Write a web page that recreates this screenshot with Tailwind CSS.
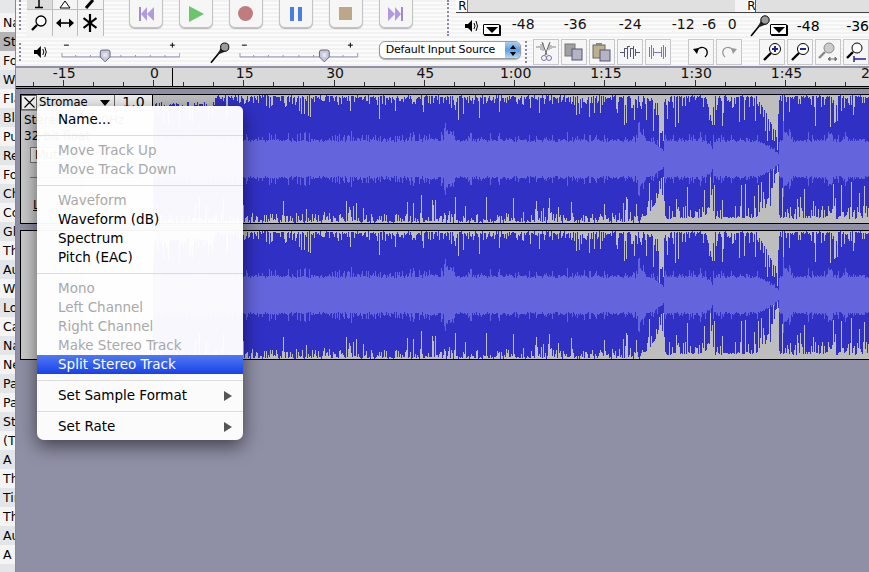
<!DOCTYPE html>
<html lang="en">
<head>
  <meta charset="UTF-8" />
  <title>Audacity</title>
  <script src="https://cdn.jsdelivr.net/npm/@tailwindcss/browser@4"></script>
</head>
<body class="overflow-hidden">
<div class="relative flex w-[869px] h-[572px] overflow-hidden bg-[#8f8fa5] text-black font-['DejaVu_Sans',sans-serif]">

  <!-- Sidebar list behind the window -->
  <div class="w-[16px] shrink-0 -mt-[6px] overflow-hidden whitespace-nowrap text-[12.5px] leading-[19px] border-r border-[#8a8a8a]">
    <div class="h-[19px] pl-[3px] bg-[#e4e8e8]">&nbsp;</div>
    <div class="h-[19px] pl-[3px] bg-[#f4f4f4]">Na</div>
    <div class="h-[19px] pl-[3px] bg-[#b4b4b4]">Str</div>
    <div class="h-[19px] pl-[3px] bg-[#f0f0f0]">Fo</div>
    <div class="h-[19px] pl-[3px] bg-[#e2e6e8]">Wi</div>
    <div class="h-[19px] pl-[3px] bg-[#f4f4f4]">Fla</div>
    <div class="h-[19px] pl-[3px] bg-[#e2e6e8]">Bla</div>
    <div class="h-[19px] pl-[3px] bg-[#f4f4f4]">Pu</div>
    <div class="h-[19px] pl-[3px] bg-[#e2e6e8]">Re</div>
    <div class="h-[19px] pl-[3px] bg-[#f4f4f4]">Fo</div>
    <div class="h-[19px] pl-[3px] bg-[#e2e6e8]">Ch</div>
    <div class="h-[19px] pl-[3px] bg-[#f4f4f4]">Co</div>
    <div class="h-[19px] pl-[3px] bg-[#e2e6e8]">Gla</div>
    <div class="h-[19px] pl-[3px] bg-[#f4f4f4]">Th</div>
    <div class="h-[19px] pl-[3px] bg-[#e2e6e8]">Au</div>
    <div class="h-[19px] pl-[3px] bg-[#f4f4f4]">We</div>
    <div class="h-[19px] pl-[3px] bg-[#e2e6e8]">Lo</div>
    <div class="h-[19px] pl-[3px] bg-[#f4f4f4]">Ca</div>
    <div class="h-[19px] pl-[3px] bg-[#e2e6e8]">Na</div>
    <div class="h-[19px] pl-[3px] bg-[#f4f4f4]">Ne</div>
    <div class="h-[19px] pl-[3px] bg-[#e2e6e8]">Pa</div>
    <div class="h-[19px] pl-[3px] bg-[#f4f4f4]">Pa</div>
    <div class="h-[19px] pl-[3px] bg-[#e2e6e8]">Sta</div>
    <div class="h-[19px] pl-[3px] bg-[#f4f4f4]">(Th</div>
    <div class="h-[19px] pl-[3px] bg-[#e2e6e8]">A l</div>
    <div class="h-[19px] pl-[3px] bg-[#f4f4f4]">Th</div>
    <div class="h-[19px] pl-[3px] bg-[#e2e6e8]">Tir</div>
    <div class="h-[19px] pl-[3px] bg-[#f4f4f4]">Th</div>
    <div class="h-[19px] pl-[3px] bg-[#e2e6e8]">Au</div>
    <div class="h-[19px] pl-[3px] bg-[#f4f4f4]">A l</div>
    <div class="h-[19px] pl-[3px] bg-[#e2e6e8]">&nbsp;</div>
  </div>

  <!-- Audacity window -->
  <div class="w-[853px] shrink-0 flex flex-col">

    <!-- Tools, transport, meters -->
    <div class="h-[38px] flex bg-[repeating-linear-gradient(0deg,#f2f2f2_0,#f2f2f2_2px,#fbfbfb_2px,#fbfbfb_4px)]">
      <div class="w-[3px] ml-[3px] mr-[5px] h-[30px] border-l-2 border-dotted border-[#8888a8]"></div>
      <div class="w-[79px] h-[36px] grid grid-cols-3 grid-rows-[9px_26px] gap-px bg-[#bdbdbd] border-r border-b border-[#bdbdbd]">
        <div class="bg-[#dcdcdc] flex justify-center items-end overflow-hidden"><svg width="14" height="9" viewBox="0 0 14 9"><path d="M7 0V7M3 7.5H11" stroke="#000" stroke-width="1.5" fill="none"/></svg></div>
        <div class="bg-[#f4f4f4] flex justify-center items-end overflow-hidden"><svg width="14" height="9" viewBox="0 0 14 9"><path d="M7 1L2 8H12Z" stroke="#000" fill="#fff"/></svg></div>
        <div class="bg-[#f4f4f4] flex justify-center items-end overflow-hidden"><svg width="14" height="9" viewBox="0 0 14 9"><path d="M3 8L10 0" stroke="#000" stroke-width="3" fill="none"/></svg></div>
        <div class="bg-[#f4f4f4] flex justify-center items-center"><svg width="18" height="18" viewBox="0 0 18 18"><circle cx="11" cy="7" r="5" stroke="#000" stroke-width="1.3" fill="#fff"/><path d="M7 11L2 16" stroke="#000" stroke-width="2.4" fill="none"/></svg></div>
        <div class="bg-[#f4f4f4] flex justify-center items-center"><svg width="18" height="10" viewBox="0 0 18 10"><path d="M3 5H15" stroke="#000" stroke-width="1.6"/><path d="M0 5L5 0.5V9.5ZM18 5L13 0.5V9.5Z" fill="#000"/></svg></div>
        <div class="bg-[#f4f4f4] flex justify-center items-center"><svg width="14" height="18" viewBox="0 0 14 18"><path d="M7 0V18M0.5 4L13.5 14M13.5 4L0.5 14" stroke="#000" stroke-width="2.2"/></svg></div>
      </div>
      <div class="w-[363px] flex gap-[16px] pl-[25px]">
        <div class="w-[34px] h-[29px] -mt-px flex items-center justify-center rounded-b-[6px] bg-[#f6f6f6] border border-[#c4c4c4] shadow-[0_1px_1px_rgba(0,0,0,0.25)]"><svg width="16" height="16" viewBox="0 0 16 16"><path d="M1 1H3V15H1Z" fill="#a488d8"/><path d="M9 1V15L3 8ZM16 1V15L9 8Z" fill="#b09ae0"/></svg></div>
        <div class="w-[34px] h-[29px] -mt-px flex items-center justify-center rounded-b-[6px] bg-[#f6f6f6] border border-[#c4c4c4] shadow-[0_1px_1px_rgba(0,0,0,0.25)]"><svg width="16" height="16" viewBox="0 0 16 16"><path d="M1 0V16L16 8Z" fill="#6cc46c"/></svg></div>
        <div class="w-[34px] h-[29px] -mt-px flex items-center justify-center rounded-b-[6px] bg-[#f6f6f6] border border-[#c4c4c4] shadow-[0_1px_1px_rgba(0,0,0,0.25)]"><div class="w-[15px] h-[15px] rounded-full bg-[#c07c7c]"></div></div>
        <div class="w-[34px] h-[29px] -mt-px flex items-center justify-center rounded-b-[6px] bg-[#f6f6f6] border border-[#c4c4c4] shadow-[0_1px_1px_rgba(0,0,0,0.25)]"><svg width="16" height="16" viewBox="0 0 16 16"><path d="M2 1H6V15H2ZM10 1H14V15H10Z" fill="#4c7ce0"/></svg></div>
        <div class="w-[34px] h-[29px] -mt-px flex items-center justify-center rounded-b-[6px] bg-[#f6f6f6] border border-[#c4c4c4] shadow-[0_1px_1px_rgba(0,0,0,0.25)]"><div class="w-[13px] h-[13px] bg-[#bca888]"></div></div>
        <div class="w-[34px] h-[29px] -mt-px flex items-center justify-center rounded-b-[6px] bg-[#f6f6f6] border border-[#c4c4c4] shadow-[0_1px_1px_rgba(0,0,0,0.25)]"><svg width="16" height="16" viewBox="0 0 16 16"><path d="M0 1V15L7 8ZM7 1V15L13 8Z" fill="#b09ae0"/><path d="M13 1H15V15H13Z" fill="#a488d8"/></svg></div>
      </div>
      <!-- Meters -->
      <div class="w-[3px] ml-[-9px] mr-[6px] h-[36px] border-l-2 border-dotted border-[#8888a8]"></div>
      <div class="flex-1 relative">
        <div class="h-[13px] flex items-start text-[12px] leading-[12px] border-b border-[#444]">
          <span class="w-[11px] pl-[2px] bg-white">R</span>
          <div class="w-[268px] h-[12px] bg-[#e0e0e0] border-l border-[#38a038]"></div>
          <div class="w-[12px] h-[12px] bg-[#f4f4f4]"></div>
          <span class="w-[8px] bg-white">R</span>
          <div class="flex-1 h-[12px] bg-[#e0e0e0] border-l border-[#c03030]"></div>
        </div>
        <div class="h-[25px] flex items-center text-[14px] pt-[1px]">
          <svg class="ml-[9px]" width="13" height="14" viewBox="0 0 13 14"><path d="M0 5H3L7 1V13L3 9H0Z" fill="#000"/><path d="M9 4Q11 7 9 10M11 2Q14 7 11 12" stroke="#000" fill="none"/></svg>
          <div class="ml-[5px] mt-[7px] w-[17px] h-[11px] flex justify-center items-center bg-white border border-black rounded-[1px] shadow-[1px_1px_0_#000]"><div class="border-x-[6px] border-x-transparent border-t-[6px] border-t-black"></div></div>
          <div class="absolute left-[30px] top-[14px] flex text-[#111] text-[14px] leading-[20px]">
            <span class="w-[74px] text-center">-48</span><span class="w-[30px] text-center">-36</span><span class="w-[80px] text-center">-24</span><span class="w-[26px] text-center">-12</span><span class="w-[26px] text-center">-6</span><span class="w-[20px] text-center">0</span>
          </div>
          <svg class="ml-[250px]" width="20" height="22" viewBox="0 0 20 22"><path d="M1 21L10 10" stroke="#000" stroke-width="1.6"/><path d="M7 13L12 4L17 9Z" fill="#222"/><circle cx="15" cy="5" r="4.2" fill="#9a9a9a" stroke="#000"/></svg>
          <div class="mt-[7px] w-[17px] h-[11px] flex justify-center items-center bg-white border border-black rounded-[1px] shadow-[1px_1px_0_#000]"><div class="border-x-[6px] border-x-transparent border-t-[6px] border-t-black"></div></div>
          <span class="ml-[3px] w-[36px] text-center">-48</span><span class="ml-[20px]">-36</span>
        </div>
      </div>
    </div>

    <!-- Mixer and edit row -->
    <div class="h-[28px] flex items-start bg-[repeating-linear-gradient(0deg,#f2f2f2_0,#f2f2f2_2px,#fbfbfb_2px,#fbfbfb_4px)]">
      <div class="w-[3px] ml-[3px] mt-[5px] h-[18px] border-l-2 border-dotted border-[#8888a8]"></div>
      <svg class="ml-[12px] mt-[7px]" width="13" height="14" viewBox="0 0 13 14"><path d="M0 5H3L7 1V13L3 9H0Z" fill="#000"/><path d="M9 4Q11 7 9 10M11 2Q14 7 11 12" stroke="#000" fill="none"/></svg>
      <svg class="ml-[14px] mt-[4px]" width="122" height="22" viewBox="0 0 122 22"><path d="M1 15H121" stroke="#8a8ab0"/><path d="M1 11V15M121 11V15M15 13V15M30 13V15M45 13V15M61 13V15M76 13V15M91 13V15M106 13V15" stroke="#999"/><path d="M3 3H8M111 3H116M113.5 0.5V5.5" stroke="#000"/><path d="M40 10Q40 8 42 8H48Q50 8 50 10V15L45 20L40 15Z" fill="#c8c8e0" stroke="#666"/><path d="M43 12H47M43 14H47" stroke="#fff"/></svg>
      <svg class="ml-[30px] mt-[4px]" width="20" height="22" viewBox="0 0 20 22"><path d="M1 21L10 10" stroke="#000" stroke-width="1.6"/><path d="M7 13L12 4L17 9Z" fill="#222"/><circle cx="15" cy="5" r="4.2" fill="#9a9a9a" stroke="#000"/></svg>
      <svg class="ml-[9px] mt-[4px]" width="122" height="22" viewBox="0 0 122 22"><path d="M1 15H121" stroke="#8a8ab0"/><path d="M1 11V15M121 11V15M15 13V15M30 13V15M45 13V15M61 13V15M76 13V15M91 13V15M106 13V15" stroke="#999"/><path d="M3 3H8M111 3H116M113.5 0.5V5.5" stroke="#000"/><path d="M82 10Q82 8 84 8H90Q92 8 92 10V15L87 20L82 15Z" fill="#c8c8e0" stroke="#666"/><path d="M85 12H89M85 14H89" stroke="#fff"/></svg>
      <div class="ml-[20px] mt-[3px] w-[145px] h-[18px] flex items-center justify-between rounded-[6px] bg-white border border-[#9a9a9a] shadow-[0_1px_1px_rgba(0,0,0,0.3)] overflow-hidden text-[11px] tracking-[-0.2px]">
        <span class="pl-[6px]">Default Input Source</span>
        <div class="w-[15px] h-full flex flex-col items-center justify-center gap-[3px] bg-gradient-to-b from-[#a8cdf0] via-[#5b9ee0] to-[#b6d8f6]">
          <div class="border-x-[3px] border-x-transparent border-b-[4px] border-b-black"></div>
          <div class="border-x-[3px] border-x-transparent border-t-[4px] border-t-black"></div>
        </div>
      </div>
      <div class="w-[3px] ml-[4px] mt-[3px] h-[22px] border-l-2 border-dotted border-[#8888a8]"></div>
      <div class="ml-[5px] mt-[1px] flex gap-[2px]">
        <div class="w-[26px] h-[26px] flex items-center justify-center bg-[#f6f6f6] border border-[#c8c8c8]"><svg width="20" height="20" viewBox="0 0 20 20"><path d="M0 5H4M16 5H20M5 2V8M7 1V9M13 2V8M15 3V7" stroke="#888"/><path d="M6 0L11 13M14 0L9 13" stroke="#666"/><circle cx="8" cy="16" r="2.5" fill="none" stroke="#7777aa"/><circle cx="13" cy="16" r="2.5" fill="none" stroke="#7777aa"/></svg></div>
        <div class="w-[26px] h-[26px] flex items-center justify-center bg-[#f6f6f6] border border-[#c8c8c8]"><svg width="20" height="20" viewBox="0 0 20 20"><rect x="1" y="2" width="10" height="12" fill="#a0a0a0" stroke="#777"/><rect x="8" y="7" width="10" height="11" fill="#b4b4c4" stroke="#55557a"/></svg></div>
        <div class="w-[26px] h-[26px] flex items-center justify-center bg-[#f6f6f6] border border-[#c8c8c8]"><svg width="20" height="20" viewBox="0 0 20 20"><rect x="1" y="3" width="12" height="13" fill="#bdb08c" stroke="#666"/><rect x="4" y="1" width="6" height="3" fill="#888"/><rect x="8" y="8" width="10" height="11" fill="#b4b4c4" stroke="#55557a"/></svg></div>
        <div class="w-[26px] h-[26px] flex items-center justify-center bg-[#f6f6f6] border border-[#c8c8c8]"><svg width="20" height="16" viewBox="0 0 20 16" shape-rendering="crispEdges"><path d="M0 8.5H4M16 8.5H20M4.5 4V13M7.5 2V15M10.5 4V13M13.5 2V15M15.5 5V12M5 4H7M8 2H10M11 4H13" stroke="#555570" fill="none"/></svg></div>
        <div class="w-[26px] h-[26px] flex items-center justify-center bg-[#f6f6f6] border border-[#c8c8c8]"><svg width="20" height="16" viewBox="0 0 20 16" shape-rendering="crispEdges"><path d="M1.5 3V13M3.5 1V15M5.5 4V12M5.5 8.5H13M13.5 3V13M15.5 1V15M17.5 3V13" stroke="#7878b4" fill="none"/></svg></div>
      </div>
      <div class="ml-[17px] mt-[1px] flex gap-[2px]">
        <div class="w-[26px] h-[26px] flex items-center justify-center bg-[#f6f6f6] border border-[#c8c8c8]"><svg width="16" height="12" viewBox="0 0 16 12"><path d="M3 5Q8 -1 13 3Q16 7 12 11" stroke="#000" stroke-width="1.3" fill="none"/><path d="M0 3L6 2L4 8Z" fill="#000"/></svg></div>
        <div class="w-[26px] h-[26px] flex items-center justify-center bg-[#f6f6f6] border border-[#c8c8c8]"><svg width="16" height="12" viewBox="0 0 16 12"><path d="M13 5Q8 -1 3 3Q0 7 4 11" stroke="#999" stroke-width="1.3" fill="none"/><path d="M16 3L10 2L12 8Z" fill="#999"/></svg></div>
      </div>
      <div class="ml-[17px] mt-[1px] flex gap-[2px]">
        <div class="w-[26px] h-[26px] flex items-center justify-center bg-[#f6f6f6] border border-[#c8c8c8]"><svg width="20" height="20" viewBox="0 0 20 20"><circle cx="13" cy="7" r="5.5" fill="#fff" stroke="#000"/><path d="M10 7H16M13 4V10" stroke="#22229c" stroke-width="2"/><path d="M9 11L2 18" stroke="#000" stroke-width="2.4"/></svg></div>
        <div class="w-[26px] h-[26px] flex items-center justify-center bg-[#f6f6f6] border border-[#c8c8c8]"><svg width="20" height="20" viewBox="0 0 20 20"><circle cx="13" cy="7" r="5.5" fill="#fff" stroke="#000"/><path d="M10 7H16" stroke="#22229c" stroke-width="2"/><path d="M9 11L2 18" stroke="#000" stroke-width="2.4"/></svg></div>
        <div class="w-[26px] h-[26px] flex items-center justify-center bg-[#f6f6f6] border border-[#c8c8c8]"><svg width="20" height="20" viewBox="0 0 20 20"><circle cx="11" cy="6" r="5" fill="#ccc" stroke="#888"/><path d="M7 10L1 16" stroke="#888" stroke-width="2.4"/><path d="M10 17H19M10 17L12 15V19ZM19 17L17 15V19Z" stroke="#777" fill="#777"/></svg></div>
        <div class="w-[26px] h-[26px] flex items-center justify-center bg-[#f6f6f6] border border-[#c8c8c8]"><svg width="20" height="20" viewBox="0 0 20 20"><circle cx="11" cy="6" r="5" fill="#fff" stroke="#000"/><path d="M7 10L1 16" stroke="#000" stroke-width="2.4"/><path d="M8 17H20M8 14V20" stroke="#22229c" stroke-width="1.5"/></svg></div>
      </div>
    </div>

    <!-- Time ruler -->
    <div class="relative h-[19px] mt-[2px] bg-[#d9d9d9] border-b border-black text-[14px] leading-[11px] text-[#111] overflow-hidden">
      <div class="flex pl-[3px] whitespace-nowrap">
        <span class="w-[90.3px] shrink-0 text-center">-15</span><span class="w-[90.3px] shrink-0 text-center">0</span><span class="w-[90.3px] shrink-0 text-center">15</span><span class="w-[90.3px] shrink-0 text-center">30</span><span class="w-[90.3px] shrink-0 text-center">45</span><span class="w-[90.3px] shrink-0 text-center">1:00</span><span class="w-[90.3px] shrink-0 text-center">1:15</span><span class="w-[90.3px] shrink-0 text-center">1:30</span><span class="w-[90.3px] shrink-0 text-center">1:45</span><span class="w-[90.3px] shrink-0 text-center">2:00</span>
      </div>
      <svg class="absolute left-0 bottom-0" width="853" height="19" viewBox="0 0 853 19"><path id="ticks" stroke="#333" fill="none"/><path d="M156.5 0V19" stroke="#000"/></svg>
    </div>
    <div class="h-[2px] bg-[#999] border-b border-black"></div>

    <!-- Tracks -->
    <div class="pt-[5px] pl-[4px] flex flex-col gap-[6px]">
      <div class="h-[130px] flex border-y border-black bg-[#bebebe]">
        <div class="w-[133px] shrink-0 relative bg-gradient-to-r from-[#c8c8c8] to-[#dcdcdc] border-l border-black text-[12px]">
          <div class="flex h-[16px] leading-[15px] border-b border-[#888]">
            <div class="w-[16px] flex items-center justify-center bg-[#eee] border border-[#666]"><svg width="11" height="11" viewBox="0 0 11 11"><path d="M0.5 0.5L10.5 10.5M10.5 0.5L0.5 10.5" stroke="#000" stroke-width="1.2"/></svg></div>
            <div class="w-[78px] flex items-center justify-between pl-[2px] pr-[4px] bg-[#eee] border-r border-[#666] text-[11.5px]">Stromae<div class="border-x-[5px] border-x-transparent border-t-[6px] border-t-black"></div></div>
            <div class="flex-1 text-center text-[14px] bg-[#eee] border-r border-black">1.0</div>
          </div>
          <div class="pl-[3px] pt-[1px] leading-[16px]">Stereo, 44100Hz<br />32-bit float</div>
          <div class="ml-[9px] mt-[3px] w-[40px] bg-[#eee] border border-[#777] text-center leading-[14px]">Mute</div>
          <div class="ml-[9px] mt-[14px] w-[110px] h-[5px] border-t border-[#777]"></div>
          <div class="ml-[12px] mt-[16px] leading-[14px] underline">L</div>
        </div>
        <svg class="wave shrink-0" data-seed="11" width="716" height="128"></svg>
      </div>
      <div class="h-[130px] flex border-y border-black bg-[#bebebe]">
        <div class="w-[133px] shrink-0 bg-gradient-to-r from-[#c8c8c8] to-[#dcdcdc] border-l border-black"></div>
        <svg class="wave shrink-0" data-seed="11" width="716" height="128"></svg>
      </div>
    </div>
  </div>

  <!-- Track popup menu -->
  <div class="absolute left-[37px] top-[106px] w-[206px] pt-[4px] pb-[4px] rounded-t-[5px] rounded-b-[7px] bg-white/[0.96] shadow-[0_6px_18px_rgba(0,0,0,0.55)] text-[13.5px] leading-[19px]">
    <div class="h-[19px] pl-[21px]">Name...</div>
    <div class="h-[12px] flex items-center"><div class="w-full h-px bg-[#dcdcdc]"></div></div>
    <div class="h-[19px] pl-[21px] text-[#a9a9a9]">Move Track Up</div>
    <div class="h-[19px] pl-[21px] text-[#a9a9a9]">Move Track Down</div>
    <div class="h-[12px] flex items-center"><div class="w-full h-px bg-[#dcdcdc]"></div></div>
    <div class="h-[19px] pl-[21px] text-[#a9a9a9]">Waveform</div>
    <div class="h-[19px] pl-[21px]">Waveform (dB)</div>
    <div class="h-[19px] pl-[21px]">Spectrum</div>
    <div class="h-[19px] pl-[21px]">Pitch (EAC)</div>
    <div class="h-[12px] flex items-center"><div class="w-full h-px bg-[#dcdcdc]"></div></div>
    <div class="h-[19px] pl-[21px] text-[#a9a9a9]">Mono</div>
    <div class="h-[19px] pl-[21px] text-[#a9a9a9]">Left Channel</div>
    <div class="h-[19px] pl-[21px] text-[#a9a9a9]">Right Channel</div>
    <div class="h-[19px] pl-[21px] text-[#a9a9a9]">Make Stereo Track</div>
    <div class="h-[19px] pl-[21px] text-white bg-gradient-to-b from-[#5078f2] to-[#1a3fe8]">Split Stereo Track</div>
    <div class="h-[12px] flex items-center"><div class="w-full h-px bg-[#dcdcdc]"></div></div>
    <div class="h-[19px] pl-[21px] pr-[11px] flex items-center justify-between">Set Sample Format<div class="border-y-[5px] border-y-transparent border-l-[8px] border-l-[#555]"></div></div>
    <div class="h-[12px] flex items-center"><div class="w-full h-px bg-[#dcdcdc]"></div></div>
    <div class="h-[19px] pl-[21px] pr-[11px] flex items-center justify-between">Set Rate<div class="border-y-[5px] border-y-transparent border-l-[8px] border-l-[#555]"></div></div>
  </div>
</div>

<script>
  // ruler ticks, every 30px or so; longer ones land under the labels
  let t = "";
  for (let i = 0; i < 29; i++) {
    const x = Math.round(16.5 + i * 30.1) + 0.5;
    t += `M${x} ${i % 3 === 1 ? 13 : 15}V19`;
  }
  document.getElementById("ticks").setAttribute("d", t);

  // fake waveform, seeded so each run draws the same thing
  function rng(seed) {
    let s = seed;
    return () => (s = (s * 16807) % 2147483647) / 2147483647;
  }

  // quiet ramps before a hit: [start x, end x, peak drop, rms drop], then it jumps back up
  const ramps = [[645, 663, 36, 10], [703, 712, 28, 8], [753, 778, 46, 12]];
  // hits: [x, decay width, rms rise]
  const hits = [[444, 12, 12], [638, 8, 12], [783, 10, 10]];

  function rampAt(x, k) {
    for (const p of ramps) {
      if (x >= p[0] && x <= p[1]) return p[k] * ((x - p[0]) / (p[1] - p[0])) ** 1.5;
    }
    return 0;
  }

  function hitAt(x) {
    for (const p of hits) {
      if (x >= p[0] && x < p[0] + p[1]) return p[2] * (1 - (x - p[0]) / p[1]);
    }
    return 0;
  }

  document.querySelectorAll(".wave").forEach((svg) => {
    const r = rng(+svg.dataset.seed * 1000);
    const mid = 64;
    let peak = "", rms = "";
    for (let i = 0; i < 716; i++) {
      const x = i + 153;
      const loud = x > 620 ? 1.5 : 1;
      const gap = (spread) => {
        const a = r();
        if (a < 0.09 * loud) return 10 + r() * spread * loud;
        if (a < 0.45) return 3 + r() * 7 * loud;
        return r() * 3;
      };
      const dip = () => (r() < 0.2 ? 0.4 : 1) * rampAt(x, 2);
      const intro = x < 215 ? 7 : 0;
      const top = Math.min(62, gap(15) + dip() + intro);
      const bottom = Math.min(62, gap(18) + dip() + (x > 640 ? 4 : 0));
      peak += `M${i + 0.5} ${Math.round(top)}V${128 - Math.round(bottom)}`;
      const h = Math.max(5, 17 + r() * 3 + (r() < 0.35 ? r() * 8 : 0) + hitAt(x) - rampAt(x, 3));
      rms += `M${i + 0.5} ${Math.round(mid - h)}V${Math.round(mid + h)}`;
    }
    svg.innerHTML = `<path d="${peak}" stroke="#3030c4" shape-rendering="crispEdges"/><path d="${rms}" stroke="#6464dc" shape-rendering="crispEdges"/>`;
  });
</script>
</body>
</html>
